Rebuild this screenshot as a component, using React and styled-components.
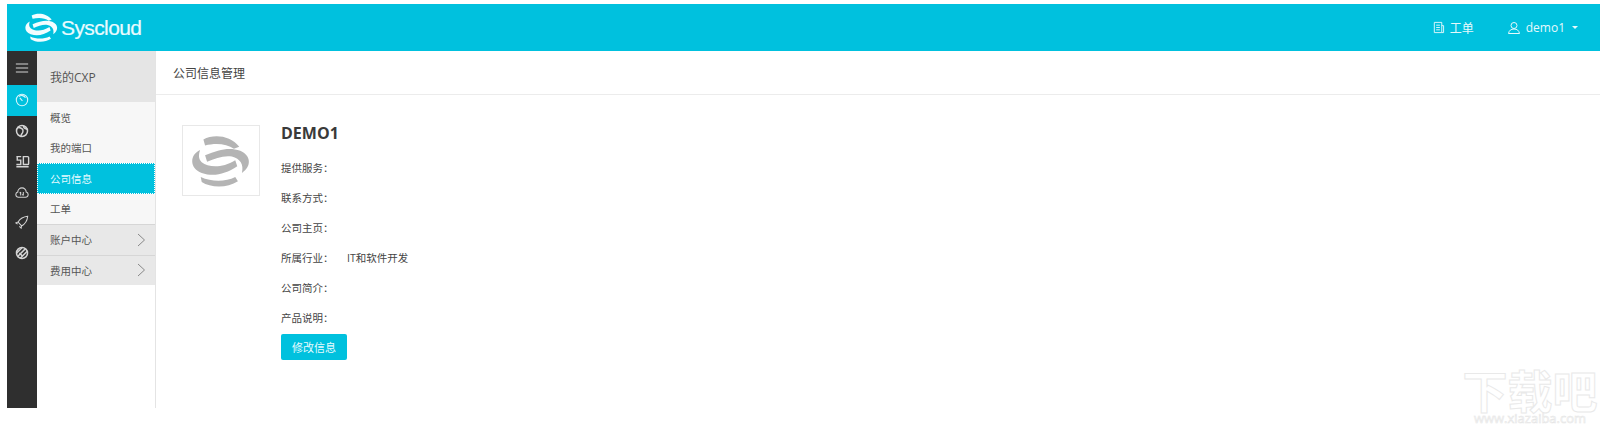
import React from 'react'
import styled, { createGlobalStyle } from 'styled-components'

const GlobalStyle = createGlobalStyle`
    html, body {
        margin: 0;
        padding: 0;
        background: #fff;
    }
    body {
        font-family: "Open Sans", "Noto Sans CJK SC", sans-serif;
        font-size: 11px;
        color: #444;
    }
`

const Page = styled.div`
    position: relative;
    width: 1600px;
    height: 424px;
    box-sizing: border-box;
    padding: 4px 0 16px 7px;
    display: flex;
    flex-direction: column;
    overflow: hidden;
`

const Header = styled.header`
    height: 47px;
    flex: none;
    background: #00c1de;
    display: flex;
    align-items: center;
    justify-content: space-between;
    padding: 0 22px 0 17px;
    color: #fff;
`

const Brand = styled.div`
    display: flex;
    align-items: center;
    gap: 2px;
    font-family: "Liberation Sans", sans-serif;
    font-size: 21px;
    letter-spacing: -0.6px;
    color: #eafbfe;
    -webkit-text-stroke: 0.2px #eafbfe;
`

const HeaderNav = styled.nav`
    display: flex;
    align-items: center;
    gap: 33px;
`

const HeaderLink = styled.a`
    display: flex;
    align-items: center;
    gap: 5px;
    font-size: 12px;
    color: #e6f9fc;
`

const Caret = styled.span`
    width: 0;
    height: 0;
    border-left: 3px solid transparent;
    border-right: 3px solid transparent;
    border-top: 3px solid #e6f9fc;
    margin-left: 2px;
`

const Body = styled.div`
    flex: 1;
    display: flex;
    min-height: 0;
`

const IconRail = styled.aside`
    width: 30px;
    flex: none;
    background: #2f2f2f;
    display: flex;
    flex-direction: column;
`

const RailItem = styled.div`
    height: ${p => p.$tall ? 34 : 30.5}px;
    display: flex;
    align-items: center;
    justify-content: center;
    background: ${p => p.$active ? '#00c1de' : 'transparent'};
    color: ${p => p.$active ? '#d8f6fb' : '#d4d4d4'};
`

const Menu = styled.div`
    width: 118px;
    flex: none;
    border-right: 1px solid #e4e4e4;
    background: #fff;
`

const MenuHead = styled.div`
    height: 51px;
    display: flex;
    align-items: center;
    padding-left: 13px;
    background: #e5e5e5;
    font-size: 12px;
    color: #555;
`

const MenuItem = styled.div`
    height: 30.5px;
    box-sizing: border-box;
    display: flex;
    align-items: center;
    justify-content: space-between;
    padding: 0 9px 0 ${p => p.$selected ? 12 : 13}px;
    font-size: 10.5px;
    background: ${p => p.$selected ? '#00c1de' : p.$group ? '#e8e8e8' : '#f7f7f7'};
    color: ${p => p.$selected ? '#e6fbff' : '#555'};
    border: ${p => p.$selected ? '1px dotted #fff' : 'none'};
    border-top: ${p => p.$group ? '1px solid #d6d6d6' : ''};
`

const Content = styled.main`
    flex: 1;
    min-width: 0;
`

const TitleBar = styled.div`
    height: 43px;
    display: flex;
    align-items: center;
    padding-left: 17px;
    border-bottom: 1px solid #ececec;
    font-size: 12px;
    color: #444;
`

const Profile = styled.section`
    display: flex;
    align-items: flex-start;
    gap: 21px;
    padding: 30px 0 0 26px;
`

const LogoBox = styled.div`
    width: 78px;
    height: 71px;
    box-sizing: border-box;
    border: 1px solid #e8e8e8;
    display: flex;
    align-items: center;
    justify-content: center;
`

const Details = styled.div`
    display: flex;
    flex-direction: column;
`

const CompanyName = styled.h2`
    margin: 0;
    height: 27px;
    line-height: 16px;
    font-size: 16px;
    font-weight: 700;
    color: #3a3a3a;
`

const InfoRow = styled.div`
    height: 30px;
    display: flex;
    align-items: center;
    font-size: 10.5px;
    color: #444;
`

const InfoLabel = styled.span`
    width: 66px;
`

const EditButton = styled.button`
    margin-top: 2px;
    width: 66px;
    height: 26px;
    border: none;
    border-radius: 2px;
    background: #00c1de;
    color: #e6fbff;
    font-family: inherit;
    font-size: 11px;
`

const Watermark = styled.div`
    position: absolute;
    right: 2px;
    bottom: 0;
    width: 136px;
    color: #fff;
    text-align: center;
`

const WatermarkTitle = styled.div`
    font-family: "Noto Sans CJK SC", sans-serif;
    font-size: 45px;
    line-height: 46px;
    font-weight: 700;
    -webkit-text-stroke: 1px #e9e9e9;
`

const WatermarkUrl = styled.div`
    font-family: "Open Sans", sans-serif;
    font-size: 13px;
    line-height: 11px;
    -webkit-text-stroke: 0.6px #e6e6e6;
`

function LogoMark({width, height, color}) {
    return (
        <svg width={width} height={height} viewBox="15 20 185 165" fill={color}>
            <path d="M55 38 C85 22 135 25 162 60 L146 66 C125 50 90 48 60 56 Z" />
            <path d="M45 70 C13 85 13 125 50 138 C85 150 120 142 156 118 L150 100 C110 125 70 122 50 106 C40 96 40 85 45 70 Z" />
            <path d="M60 85 C100 70 130 60 165 72 C197 86 200 118 170 138 C176 112 165 96 140 89 C115 85 90 95 66 105 Z" />
            <path d="M47 150 C80 165 120 165 150 150 L158 163 C125 185 75 182 50 165 Z" />
        </svg>
    )
}

const iconProps = {width: 14, height: 14, viewBox: '0 0 16 16', fill: 'none', stroke: 'currentColor', strokeWidth: 1.2}

const RailIcons = [
    <svg {...iconProps} strokeWidth={1.2}><path d="M1 3.500h14M1 8h14M1 12.500h14" /></svg>,
    <svg {...iconProps}><circle cx="8" cy="8" r="6.500" /><path d="M5.500 5.500l3 3.500M4.500 4A5 5 0 0 1 12 5.500" /></svg>,
    <svg {...iconProps} strokeWidth={1.7}><circle cx="8" cy="8" r="6.300" /><path d="M3 4c4 0 7 2 6 5s-3 3-2 6M10 2c-1 2 1 3 4 4" /></svg>,
    <svg {...iconProps} strokeWidth={1.6} width={15}><path d="M1 3h5.500M6 3H2v4h4v5H1M9 3h5a1 1 0 0 1 1 1v7a1 1 0 0 1-1 1H9zM1 14.500h14" /></svg>,
    <svg {...iconProps}><path d="M4.500 14H4a3 3 0 0 1-.8-5.900 4.800 4.800 0 0 1 9.600 0A3 3 0 0 1 12 14zM6.500 8v4M5.300 9.200L6.500 8M9.500 12V8M8.300 10.800L9.500 12" /></svg>,
    <svg {...iconProps}><path d="M14.500 1.500C10 2 6 4 3.500 8l4 4.500c4-2 6.500-6 7-11zM3.500 8L1 9l2 1.500M7.500 12.500L7 15l-2-2" /></svg>,
    <svg {...iconProps} strokeWidth={1.7}><circle cx="8" cy="8" r="6.300" /><path d="M3 12L12 3M6 14l8-8M2 8l6-6M5 8l3 3" /></svg>,
]

const menuItems = [
    {label: '概览'},
    {label: '我的端口'},
    {label: '公司信息', selected: true},
    {label: '工单'},
    {label: '账户中心', group: true},
    {label: '费用中心', group: true},
]

const infoRows = [
    {label: '提供服务：', value: ''},
    {label: '联系方式：', value: ''},
    {label: '公司主页：', value: ''},
    {label: '所属行业：', value: 'IT和软件开发'},
    {label: '公司简介：', value: ''},
    {label: '产品说明：', value: ''},
]

export default function App() {
    return (
        <>
            <GlobalStyle />
            <Page>
                <Header>
                    <Brand>
                        <LogoMark width={35} height={31} color="#f2fdff" />
                        Syscloud
                    </Brand>
                    <HeaderNav>
                        <HeaderLink>
                            <svg width="13" height="13" viewBox="0 0 14 14" fill="none" stroke="currentColor">
                                <path d="M2.500 1.500h8v11h-8zM4.500 4.500h4M4.500 7h4M4.500 9.500h4M10.500 5h2v7.500h-2" />
                            </svg>
                            工单
                        </HeaderLink>
                        <HeaderLink>
                            <svg width="14" height="14" viewBox="0 0 14 14" fill="none" stroke="currentColor">
                                <circle cx="7" cy="4.500" r="3" />
                                <path d="M1.500 12.500c.5-3 2.500-4.500 5.500-4.500s5 1.500 5.500 4.500z" />
                            </svg>
                            demo1
                            <Caret />
                        </HeaderLink>
                    </HeaderNav>
                </Header>
                <Body>
                    <IconRail>
                        {RailIcons.map((icon, index) => (
                            <RailItem key={index} $tall={index === 0} $active={index === 1}>{icon}</RailItem>
                        ))}
                    </IconRail>
                    <Menu>
                        <MenuHead>我的CXP</MenuHead>
                        {menuItems.map(item => (
                            <MenuItem key={item.label} $selected={item.selected} $group={item.group}>
                                {item.label}
                                {item.group && (
                                    <svg width="9" height="14" viewBox="0 0 9 14" fill="none" stroke="#888">
                                        <path d="M1 1l6.500 6L1 13" />
                                    </svg>
                                )}
                            </MenuItem>
                        ))}
                    </Menu>
                    <Content>
                        <TitleBar>公司信息管理</TitleBar>
                        <Profile>
                            <LogoBox>
                                <LogoMark width={62} height={56} color="#b4b4b4" />
                            </LogoBox>
                            <Details>
                                <CompanyName>DEMO1</CompanyName>
                                {infoRows.map(row => (
                                    <InfoRow key={row.label}>
                                        <InfoLabel>{row.label}</InfoLabel>
                                        {row.value}
                                    </InfoRow>
                                ))}
                                <EditButton>修改信息</EditButton>
                            </Details>
                        </Profile>
                    </Content>
                </Body>
                <Watermark>
                    <WatermarkTitle>下载吧</WatermarkTitle>
                    <WatermarkUrl>www.xiazaiba.com</WatermarkUrl>
                </Watermark>
            </Page>
        </>
    )
}
